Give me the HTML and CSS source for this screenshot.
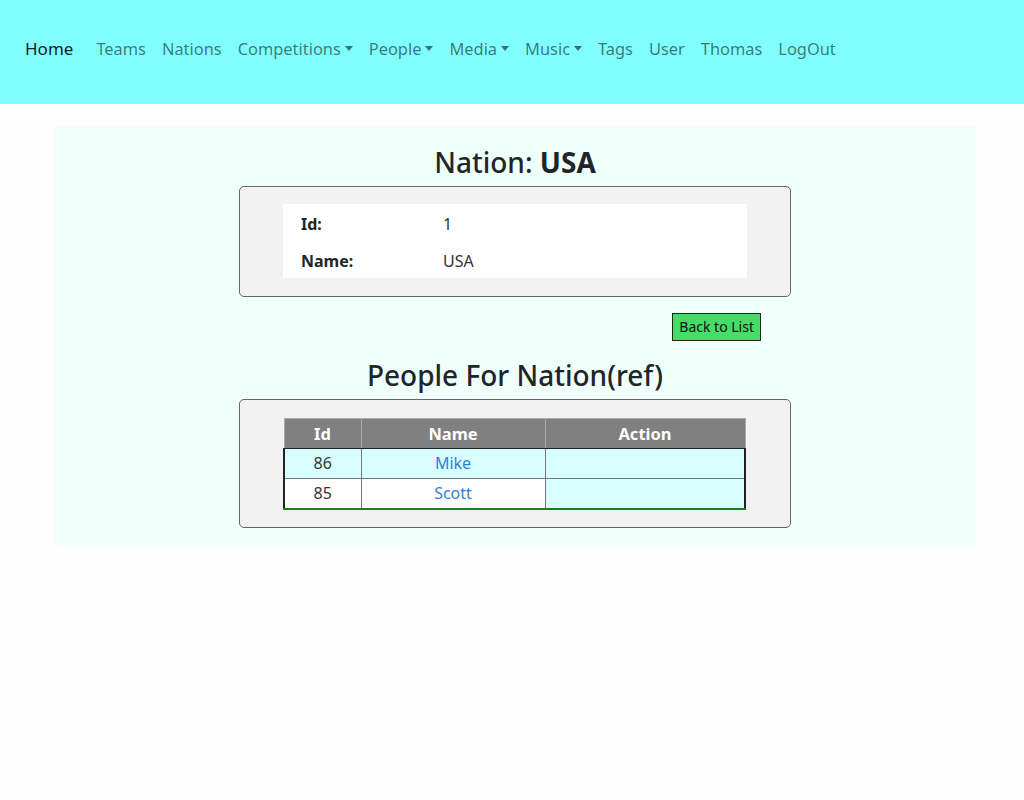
FILE: index.html
```html
<!DOCTYPE html>
<html lang="en">
<head>
<meta charset="utf-8">
<title>Nation: USA</title>
<link rel="stylesheet" href="styles.css">
</head>
<body>
<nav class="navbar">
  <a class="brand" href="#">Home</a>
  <ul class="nav">
    <li><a class="nav-link" href="#">Teams</a></li>
    <li><a class="nav-link" href="#">Nations</a></li>
    <li><a class="nav-link dropdown" href="#">Competitions</a></li>
    <li><a class="nav-link dropdown" href="#">People</a></li>
    <li><a class="nav-link dropdown" href="#">Media</a></li>
    <li><a class="nav-link dropdown" href="#">Music</a></li>
    <li><a class="nav-link" href="#">Tags</a></li>
    <li><a class="nav-link" href="#">User</a></li>
    <li><a class="nav-link" href="#">Thomas</a></li>
    <li><a class="nav-link" href="#">LogOut</a></li>
  </ul>
</nav>
<main class="container">
  <h2 class="title">Nation: <b>USA</b></h2>
  <div class="panel">
    <table class="details">
      <tr><th>Id:</th><td>1</td></tr>
      <tr><th>Name:</th><td>USA</td></tr>
    </table>
  </div>
  <div class="actions">
    <button class="btn-back" type="button">Back to List</button>
  </div>
  <h2 class="title title-sub">People For Nation(ref)</h2>
  <div class="panel panel-grid">
    <table class="grid">
      <thead>
        <tr><th class="c-id">Id</th><th class="c-name">Name</th><th class="c-act">Action</th></tr>
      </thead>
      <tbody>
        <tr class="odd"><td>86</td><td><a href="#">Mike</a></td><td class="act"></td></tr>
        <tr class="even"><td>85</td><td><a href="#">Scott</a></td><td class="act"></td></tr>
      </tbody>
    </table>
  </div>
</main>
</body>
</html>
```
FILE: styles.css
```css
* { box-sizing: border-box; }
html, body {
  margin: 0;
  padding: 0;
  background: #fefefe;
  font-family: "Noto Sans", "Open Sans", sans-serif;
  font-size: 16px;
  color: #212529;
}
a { text-decoration: none; }

.navbar {
  display: flex;
  align-items: center;
  height: 104px;
  padding: 0 16px 7px 25px;
  background: #80ffff;
}
.brand {
  font-size: 17px;
  color: rgba(0, 0, 0, 0.9);
  margin-right: 15px;
}
.nav {
  display: flex;
  list-style: none;
  margin: 0;
  padding: 0;
}
.nav-link {
  display: block;
  padding: 8px 8px;
  font-size: 16.4px;
  color: rgba(0, 0, 0, 0.55);
}
.dropdown::after {
  content: "";
  display: inline-block;
  margin-left: 4px;
  vertical-align: 4px;
  border-top: 5px solid;
  border-left: 4.5px solid transparent;
  border-right: 4.5px solid transparent;
}

.container {
  margin: 22px 48px 0 54px;
  padding: 19px 0 17px;
  background: #effffa;
}
.title {
  margin: 0 0 7px;
  text-align: center;
  font-size: 28px;
  line-height: 34px;
  font-weight: 500;
}
.title b { font-weight: 700; }
.title-sub { margin-top: 17px; }

.panel {
  width: 552px;
  margin: 0 auto;
  padding: 17px 43px 18px;
  background: #f2f2f2;
  border: 1px solid #666;
  border-radius: 5px;
}
.panel-grid { padding: 18px 43px 17px; }

.details {
  width: 100%;
  border-collapse: collapse;
  background: #fff;
}
.details th, .details td {
  padding: 10px 0 6px 18px;
  line-height: 21px;
  text-align: left;
  font-size: 16px;
}
.details th { width: 142px; font-weight: 700; }
.details td { color: #333; }

.actions {
  width: 552px;
  margin: 16px auto 0;
  display: flex;
  justify-content: flex-end;
  padding-right: 30px;
}
.btn-back {
  font-family: inherit;
  font-size: 14px;
  line-height: 18px;
  padding: 4px 6px;
  background: #44dd66;
  border: 1px solid #1a2a1a;
  border-radius: 0;
  color: #111;
}

.grid {
  width: 463px;
  margin-left: 0;
  border-collapse: collapse;
  text-align: center;
}
.grid thead th {
  background: #808080;
  color: #fff;
  font-weight: 700;
  font-size: 16.5px;
  line-height: 20px;
  padding: 5px 0 4px;
  border: 1px solid #aaa;
  border-bottom: 1px solid #222;
}
.c-id { width: 77px; }
.c-name { width: 184px; }
.grid tbody td {
  font-size: 16px;
  line-height: 20px;
  padding: 4px 0 5px;
  border-left: 1px solid #777;
  border-top: 1px solid #777;
  color: #333;
}
.grid tbody td:first-child { border-left: 2px solid #222; }
.grid tbody td:last-child { border-right: 2px solid #222; }
.grid tbody tr:last-child td { border-bottom: 2px solid #217a21; }
.grid tbody tr.odd td { background: #d8ffff; }
.grid tbody tr.even td { background: #fff; }
.grid tbody tr.even td.act { background: #d8ffff; }
.grid a { color: #2f7fd0; }
```
